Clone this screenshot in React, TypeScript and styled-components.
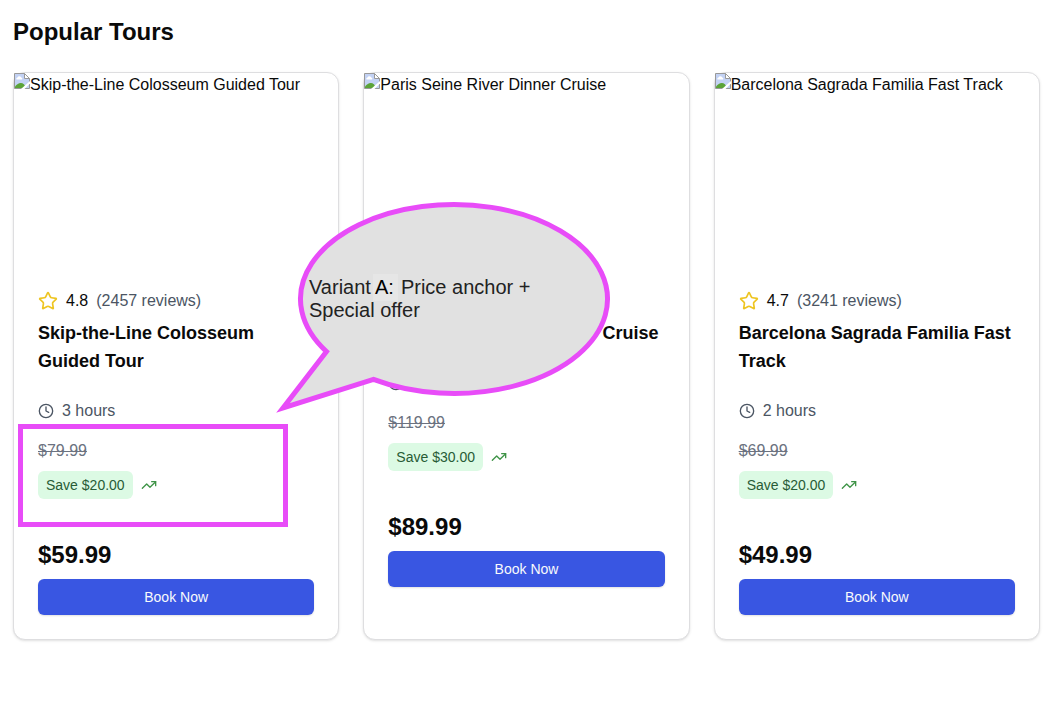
import React from "react";
import styled, { createGlobalStyle } from "styled-components";
import { Clock, Star, TrendingUp } from "lucide-react";

const GlobalStyle = createGlobalStyle`
  *, *::before, *::after { box-sizing: border-box; }
  body {
    margin: 0;
    background: #fff;
    color: #0a0a0a;
    font-family: "Liberation Sans", Arial, sans-serif;
    font-size: 16px;
    line-height: 24px;
  }
  h2, h3, p { margin: 0; }
`;

const Page = styled.main`
  position: relative;
  width: 1056px;
  height: 711px;
  padding: 16px 16px 0 13px;
  overflow: hidden;
`;

const Heading = styled.h2`
  margin-bottom: 24px;
  font-size: 24px;
  line-height: 32px;
  font-weight: 700;
`;

const Grid = styled.div`
  display: grid;
  grid-template-columns: repeat(3, 1fr);
  gap: 24px;
`;

const Card = styled.article`
  height: 568px;
  border: 1px solid #dedee0;
  border-radius: 12px;
  background: #fff;
  box-shadow: 0 1px 3px rgba(0, 0, 0, 0.1), 0 1px 2px -1px rgba(0, 0, 0, 0.1);
`;

const Photo = styled.div`
  display: flex;
  align-items: flex-start;
  height: 192px;
  white-space: nowrap;

  svg { flex: none; }
`;

const Body = styled.div`
  display: flex;
  flex-direction: column;
  padding: 24px;
`;

const Rating = styled.div`
  display: flex;
  align-items: center;
  gap: 8px;
  height: 24px;
  margin-bottom: 6px;
`;

const Muted = styled.span`
  color: #4b5563;
`;

const Title = styled.h3`
  margin-bottom: 24px;
  font-size: 18px;
  line-height: 28px;
  font-weight: 700;
`;

const Duration = styled.div`
  display: flex;
  align-items: center;
  gap: 8px;
  height: 24px;
  margin-bottom: 16px;
  color: #4b5563;
`;

const OldPrice = styled.p`
  margin-bottom: 8px;
  color: #6b7280;
  text-decoration: line-through;
`;

const Savings = styled.div`
  display: flex;
  align-items: center;
  gap: 8px;
  margin-bottom: 40px;
`;

const Badge = styled.span`
  padding: 4px 8px;
  border-radius: 6px;
  background: #dcfae4;
  color: #285c36;
  font-size: 14px;
  line-height: 20px;
`;

const Price = styled.p`
  margin-bottom: 8px;
  font-size: 24px;
  line-height: 32px;
  font-weight: 700;
`;

const BookButton = styled.button`
  height: 36px;
  border: 0;
  border-radius: 6px;
  background: #3956e2;
  box-shadow: 0 1px 2px rgba(0, 0, 0, 0.12);
  color: #f8fafc;
  font: 14px/20px "Liberation Sans", Arial, sans-serif;
`;

const Highlight = styled.div`
  position: absolute;
  left: 17.5px;
  top: 424px;
  width: 270px;
  height: 103px;
  border: 5px solid #e84cf8;
`;

const Callout = styled.div`
  position: absolute;
  left: 270px;
  top: 190px;
  width: 350px;
  height: 230px;
  padding: 86px 0 0 39px;
  color: #222;
  font-size: 20px;
  line-height: 23px;
`;

const Bubble = styled.svg`
  position: absolute;
  inset: 0;
`;

const CalloutText = styled.p`
  position: relative;
  white-space: nowrap;
`;

const Variant = styled.span`
  display: inline-block;
  height: 27px;
  width: 25px;
  margin: -2px 3px -2px 2px;
  padding: 2px 0 2px 2px;
  background: #e6e6e6;
  color: #000;
`;

const MissingImageIcon = () => (
  <svg width="16" height="16" viewBox="0 0 16 16">
    <path d="M.5.5h10l5 5v10H.5z" fill="#c3d2f4" />
    <path d="M2.5 6.5a1.3 1.3 0 0 1 1-2 2 2 0 0 1 3.7 0 1.2 1.2 0 0 1 .8 2z" fill="#fff" />
    <path d="M1 15v-1.5C3 11 5 9.8 7 10c2 .2 3.6 1.5 4 3v2z" fill="#5ba338" />
    <path d="M.5 15.5V.5h10l5 5v10z" fill="none" stroke="#999" />
    <path d="M10.5.5v5h5z" fill="#fff" stroke="#999" />
    <path d="M16 8v2.5L10.5 16H7z" fill="#fff" />
  </svg>
);

interface Tour {
  title: string;
  rating?: string;
  reviews?: number;
  duration?: string;
  oldPrice: string;
  saving: string;
  price: string;
}

const tours: Tour[] = [
  { title: "Skip-the-Line Colosseum Guided Tour", rating: "4.8", reviews: 2457, duration: "3 hours", oldPrice: "$79.99", saving: "$20.00", price: "$59.99" },
  { title: "Paris Seine River Dinner Cruise", oldPrice: "$119.99", saving: "$30.00", price: "$89.99" },
  { title: "Barcelona Sagrada Familia Fast Track", rating: "4.7", reviews: 3241, duration: "2 hours", oldPrice: "$69.99", saving: "$20.00", price: "$49.99" },
];

const TourCard = ({ tour }: { tour: Tour }) => (
  <Card>
    <Photo>
      <MissingImageIcon />
      <span>{tour.title}</span>
    </Photo>
    <Body>
      <Rating>
        <Star size={20} color="#eec522" />
        {tour.rating && <span>{tour.rating}</span>}
        {tour.reviews && <Muted>({tour.reviews} reviews)</Muted>}
      </Rating>
      <Title>{tour.title}</Title>
      <Duration>
        <Clock size={16} />
        {tour.duration && <span>{tour.duration}</span>}
      </Duration>
      <OldPrice>{tour.oldPrice}</OldPrice>
      <Savings>
        <Badge>Save {tour.saving}</Badge>
        <TrendingUp size={16} color="#3f9447" />
      </Savings>
      <Price>{tour.price}</Price>
      <BookButton>Book Now</BookButton>
    </Body>
  </Card>
);

export default function App() {
  return (
    <Page>
      <GlobalStyle />
      <Heading>Popular Tours</Heading>
      <Grid>
        {tours.map((tour) => (
          <TourCard key={tour.title} tour={tour} />
        ))}
      </Grid>
      <Highlight />
      <Callout>
        <Bubble width="350" height="230" viewBox="270 190 350 230">
          <path
            d="M326.5 351.62A153.5 94.5 0 1 1 373.5 379.46L283 408Z"
            fill="#e1e1e1"
            stroke="#e84cf8"
            strokeWidth="5"
            strokeMiterlimit="10"
          />
        </Bubble>
        <CalloutText>
          Variant<Variant>A:</Variant>Price anchor +<br />
          Special offer
        </CalloutText>
      </Callout>
    </Page>
  );
}
